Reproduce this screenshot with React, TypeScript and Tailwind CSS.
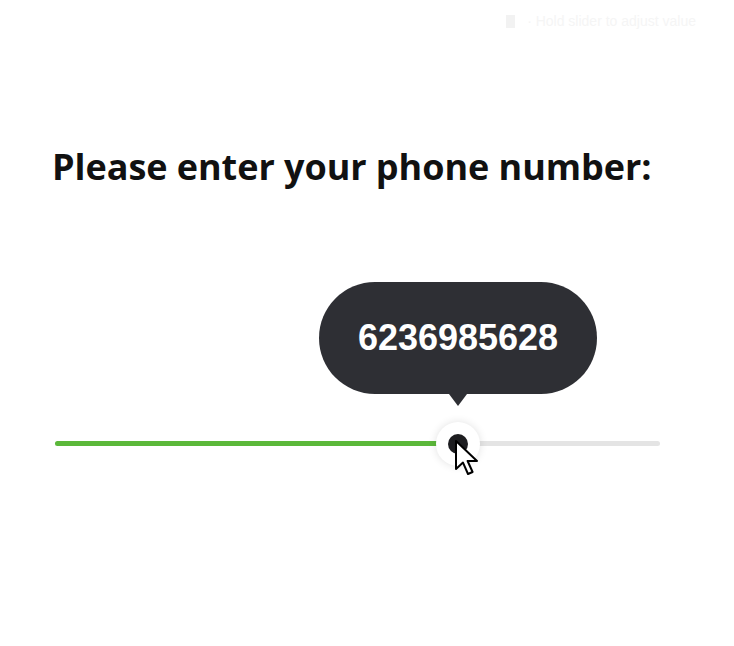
export default function App() {
  const percent = 66.9

  return (
    <div className="w-[734px] h-[646px] bg-white overflow-hidden font-['Open_Sans',sans-serif]">
      {/* faint header remnant */}
      <div className="flex justify-end items-center gap-3 pt-[11px] pr-[38px] text-[14px] text-[#f5f5f5] font-['Liberation_Sans',sans-serif]">
        <span className="w-[9px] h-[13px] bg-[#f2f2f2]"></span>
        <span>· Hold slider to adjust value</span>
      </div>

      {/* question */}
      <h1 className="mt-[115px] ml-[52px] text-[36px] font-bold text-[#111] tracking-[-0.05px] leading-[40px]">
        Please enter your phone number:
      </h1>

      {/* slider */}
      <div className="mt-[254px] px-[55px]">
        <div className="relative h-[5px] w-[605px] bg-[#e4e4e4] rounded-full">
          <div className="h-full bg-[#5bb83a] rounded-full" style={{ width: `${percent}%` }} />

          {/* tooltip */}
          <div className="absolute left-[403px] -translate-x-1/2 bottom-[40px] flex flex-col items-center">
            <div className="w-[278px] h-[112px] rounded-[56px] bg-[#2e2f34] flex items-center justify-center">
              <span className="text-white text-[36px] font-bold font-['Liberation_Sans',sans-serif]">
                6236985628
              </span>
            </div>
            <div className="w-0 h-0 border-l-[9px] border-r-[9px] border-t-[12px] border-l-transparent border-r-transparent border-t-[#2e2f34]" />
          </div>

          {/* thumb */}
          <div className="absolute left-[403px] top-1/2 -translate-x-1/2 -translate-y-1/2 w-[44px] h-[44px] rounded-full bg-white shadow-[0_0_8px_rgba(0,0,0,0.12)] flex items-center justify-center">
            <div className="w-[20px] h-[20px] rounded-full bg-[#1d1d20]" />
          </div>

          {/* cursor */}
          <svg
            className="absolute left-[399px] top-[-2px]"
            width="26"
            height="38"
            viewBox="0 0 13 19"
          >
            <path
              d="M1 1 L1 15 L4.5 11.8 L7 17.5 L9.3 16.5 L6.8 11 L11.5 11 Z"
              fill="white"
              stroke="black"
              strokeWidth="1"
              strokeLinejoin="round"
            />
          </svg>
        </div>
      </div>
    </div>
  )
}
